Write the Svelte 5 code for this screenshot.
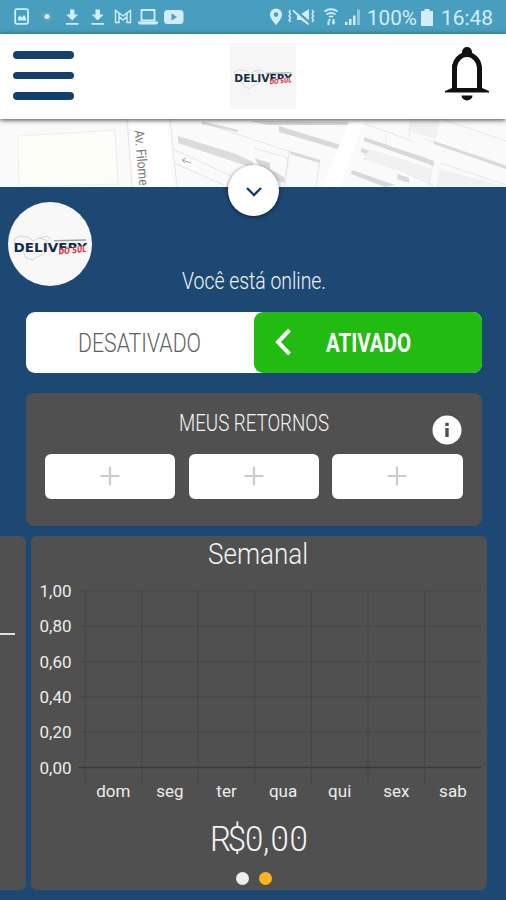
<script lang="ts">
  const days = ['dom', 'seg', 'ter', 'qua', 'qui', 'sex', 'sab'];
  const ticks = ['1,00', '0,80', '0,60', '0,40', '0,20', '0,00'];
  const slots = [0, 1, 2];

  const colWidth = 56.6;
  const rowHeight = 35.3;
  const gridLeft = 54;
  const gridTop = 18;

  let online = $state(true);
  let page = $state(1);
</script>

<!-- condensed display text: stretched to a fixed width, baseline at the bottom -->
{#snippet label(text: string, width: number, cap: number, kind: string)}
  <svg class="label {kind}" {width} height={cap} viewBox="0 0 {width} {cap}">
    <text x="0" y={cap} font-size={cap / 0.711} textLength={width} lengthAdjust="spacingAndGlyphs">{text}</text>
  </svg>
{/snippet}

{#snippet logo(size: number)}
  <svg class="logo" width={size} height={size} viewBox="0 0 84 84">
    <path class="logo-map" d="M6 37l6-3 8 1 5 4 6-3 7 2 3 6-5 8-7 3-4 3-7-2-3-7-7-2zM31 36l7-2 5 3" />
    <text class="logo-main" x="5.500" y="49.500" font-size="13" textLength="73.500" lengthAdjust="spacingAndGlyphs">DELIVERY</text>
    <path class="logo-cut" d="M51 48l28-4.500v8H53z" />
    <path class="logo-band" d="M46 38.700l32-.8" />
    <text class="logo-sub" x="51" y="52.500" font-size="8.500" textLength="28" lengthAdjust="spacingAndGlyphs" transform="rotate(-6 52 53)">DO SUL</text>
  </svg>
{/snippet}

<div class="phone">
  <div class="status">
    <svg class="status-icons" width="184" height="34" viewBox="0 0 184 34">
      <rect x="15.2" y="9.2" width="12.8" height="14.6" rx="1.5" class="line" />
      <path d="M18 20.5v-3l2-2 2 2 2-2.500 2 3v2.500z" />
      <circle cx="47" cy="16.500" r="4.600" class="ring" />
      <circle cx="47" cy="16.500" r="2.600" />
      <path d="M70 9.500h4.400v5h3.800l-6 6-6-6H70zM66 23h12.500v1.800H66z" />
      <path d="M95.500 9.500h4.400v5h3.800l-6 6-6-6h3.800zM91.500 23H104v1.800H91.500z" />
      <path class="line thin" d="M115.500 22.500v-12l7.500 5.500 7.500-5.500v12h-3.500v-6l-4 3.500-4-3.500v6zM119 16.500v-3M127 16.500v-3" />
      <path class="line" d="M141.500 10h13v10.500h-13z" />
      <path d="M138 21.500h20v1q0 2-2 2h-16q-2 0-2-2z" />
      <rect x="164" y="10" width="19.500" height="14" rx="3.500" />
      <path class="hole" d="M171.500 13.500l5.500 3.500-5.500 3.500z" />
    </svg>
    <div class="status-right">
      <svg width="98" height="34" viewBox="267 0 98 34">
        <path fill-rule="evenodd" d="M274 8.500a6 6 0 0 1 6 6c0 4.200-6 10.500-6 10.500s-6-6.300-6-10.500a6 6 0 0 1 6-6zm0 3.800a2.300 2.300 0 1 0 0 4.600 2.300 2.300 0 0 0 0-4.600z" />
        <path d="M295 14h4l8-5v16l-8-5h-4z" />
        <path class="line thin" d="M288.500 10l-1.500 2 1.500 2-1.500 2 1.500 2-1.500 2 1.500 2M310 10l1.500 2-1.500 2 1.500 2-1.500 2 1.500 2-1.500 2" />
        <path class="slash" d="M292 10l15 13" />
        <path class="line" d="M291 10.500l15 13.500" />
        <path class="line" d="M322.500 11.500q6.500-4.500 13 0M324.500 14.500q4.500-3 9 0M327 17q2-1.300 4 0" />
        <path d="M324.500 21h2v-2h2v2h-1v4h-2v-4zM332.500 19h-2v3h-1l2 3 2-3h-1z" />
        <path d="M343 22h2.500v3H343zM347 19h2.500v6H347zM351 15.500h2.500V25H351z" />
        <path class="faded" d="M355 9.500h3V25h-3z" />
      </svg>
      {@render label('100%', 50, 15, 'status-text')}
      <svg class="battery" width="12" height="17" viewBox="0 0 12 17"><path d="M3.500 0h5v2H12v15H0V2h3.500z" /></svg>
      {@render label('16:48', 52, 15, 'status-text')}
    </div>
  </div>

  <header>
    <button class="menu" aria-label="Menu"><i></i><i></i><i></i></button>
    <div class="brand">{@render logo(66)}</div>
    <button class="bell" aria-label="Notificações">
      <svg width="46" height="56" viewBox="0 0 46 56">
        <path class="bell-line" d="M10.500 41V23a12.500 14.500 0 0 1 25 0v18" />
        <path d="M8 18v24L1 45v1.500h44V45l-7-3V30h-5v12H13V24zM18 9V6a5 5 0 0 1 10 0v3zM17.500 49.500h11a5.500 5 0 0 1-11 0z" />
      </svg>
    </button>
  </header>

  <div class="map">
    <svg width="506" height="68" viewBox="0 0 506 68">
      <rect width="506" height="68" fill="#fafafa" />
      <path fill="#fdfdf8" stroke="#ededee" d="M18 17l97-6 3 54-99 3z" />
      <path fill="#fff" d="M129 0h38l6 68h-38z" />
      <path stroke="#e6e6e6" fill="none" d="M127 0l5 68M170 0l7 68M173 30l60 28M174 44l50 22M210 6l90 30M254 29l34 10-4 28M289 33l-4 33M320 40l-4 28M337 39l-6 29M364 21l60 18M386 15v12l40 12M412 0l-3 18M424 20l100 32M363 35l70 31M433 42l-4 25M365 5l50 18M440 44l66 22M442 0l64 22" />
      <path fill="#dedcda" d="M178 17l58 18 17 8v6l-15-5-60-20z" />
      <path fill="#d9d9d9" d="M202 2l36 9v2l-36-8zM279 7l65 20v5l-65-19zM290 32l30 9v3l-30-9zM364 18l70 24v5l-70-25zM361 29l23 8v4l-23-8zM352 51l43 15-10 2-34-13zM398 55l11 4v5l-12-4zM434 22l72 25v3l-72-25zM254 39l16 5v6l14 8v6l-16-5zM250 2l102 1v3h-85z" />
      <path fill="#f1f1f1" d="M370 30l62 20-3 12-66-22zM410 0h30l-4 20-28-8zM440 50l66 18h-70z" />
      <path fill="#fff" d="M350 0h15l-25 68h-18z" />
      <path stroke="#aaa9c4" fill="none" d="M182 41l9 3m-9-3l4-2m-4 2l3 3" />
      <text class="street" x="0" y="0" textLength="55.500" lengthAdjust="spacingAndGlyphs" transform="translate(134.500 11.500) rotate(85)">Av. Filome</text>
    </svg>
  </div>

  <main>
    <button class="collapse" aria-label="Recolher">
      <svg width="18" height="12" viewBox="0 0 18 12"><path d="M2 2l7 7 7-7" /></svg>
    </button>
    <div class="avatar">{@render logo(84)}</div>

    <div class="online">{@render label('Você está online.', 144, 16.5, 'light')}</div>

    <div class="toggle">
      <button class="off" onclick={() => (online = false)}>
        {@render label('DESATIVADO', 123, 18.5, 'muted')}
      </button>
      <button class="on" class:active={online} onclick={() => (online = true)}>
        <svg width="18" height="28" viewBox="0 0 18 28"><path d="M15.500 2L4 14l11.500 12" /></svg>
        {@render label('ATIVADO', 85, 18.5, 'strong')}
      </button>
    </div>

    <section class="returns">
      <div class="returns-head">
        {@render label('MEUS RETORNOS', 150, 17, 'light')}
        <svg class="info" width="30" height="30" viewBox="0 0 30 30">
          <circle cx="15" cy="15" r="14.500" fill="#fff" />
          <path fill="#4f4f4f" d="M13.300 7.800h3.400v3.200h-3.400zM13.300 13h3.400v9h-3.400z" />
        </svg>
      </div>
      <div class="slots">
        {#each slots as slot (slot)}
          <button class="slot" aria-label="Adicionar retorno">
            <svg width="20" height="20" viewBox="0 0 20 20"><path d="M10 .5v19M.5 10h19" /></svg>
          </button>
        {/each}
      </div>
    </section>

    <div class="carousel">
      <section class="card previous"><hr /></section>
      <section class="card weekly">
        {@render label('Semanal', 100, 21.5, 'light')}
        <svg class="chart" width="456" height="240" viewBox="0 0 456 240">
          {#each ticks as tick, i}
            <path class="grid" class:axis={i === 5} d="M{gridLeft - 7} {gridTop + i * rowHeight}h{7 * colWidth + 7}" />
            <text x="40.500" y={gridTop + i * rowHeight + 6} text-anchor="end">{tick}</text>
          {/each}
          {#each days as day, i}
            <path class="grid" d="M{gridLeft + i * colWidth} {gridTop}v{5 * rowHeight + 18}" />
            <text x={gridLeft + (i + 0.5) * colWidth} y="224" text-anchor="middle">{day}</text>
          {/each}
        </svg>
        <svg class="amount" width="98" height="32" viewBox="0 0 98 32">
          <text x="0 19 37.600 57 65 85.500" y="25.500" font-size="35.500" transform="scale(.93 1)">R$0,00</text>
          {#each [44.3, 69.8, 88.8] as cx}
            <circle {cx} cy="12.800" r="1.300" />
          {/each}
        </svg>
        <div class="dots">
          {#each [0, 1] as dot}
            <span class:current={page === dot}></span>
          {/each}
        </div>
      </section>
    </div>
  </main>
</div>

<style>
  :global(body) {
    background: #1d4873;
  }

  .phone {
    width: 506px;
    height: 900px;
    overflow: hidden;
    font-family: Roboto, sans-serif;
    background: #1d4873;
  }

  svg {
    display: block;
    flex-shrink: 0;
  }

  button {
    padding: 0;
    border: none;
    background: none;
    font: inherit;
  }

  .label,
  .logo,
  .amount {
    overflow: visible;
  }

  .light {
    fill: #f4f4f4;
    font-weight: 300;
  }

  .muted {
    fill: #606060;
    font-weight: 300;
  }

  .strong {
    fill: #fff;
    font-weight: 700;
  }

  .status-text {
    fill: #d3edf7;
  }

  .status {
    height: 34px;
    display: flex;
    justify-content: space-between;
    background: #489ebe;
    fill: #d3edf7;
  }

  .status .line {
    fill: none;
    stroke: #d3edf7;
    stroke-width: 1.8;
  }

  .status .thin {
    stroke-width: 1.4;
  }

  .ring {
    fill: none;
    stroke: #6e9da8;
    stroke-width: 2;
  }

  .hole {
    fill: #489ebe;
  }

  .slash {
    stroke: #489ebe;
    stroke-width: 4;
  }

  .faded {
    opacity: 0.5;
  }

  .status-right {
    display: flex;
    align-items: center;
    padding-right: 13px;
  }

  .battery {
    margin: 0 8px 0 4px;
  }

  header {
    position: relative;
    z-index: 2;
    height: 84.5px;
    display: flex;
    align-items: center;
    justify-content: space-between;
    box-sizing: border-box;
    padding: 0 16px 0 13px;
    background: #fff;
    box-shadow: 0 1px 5px rgba(0, 0, 0, 0.75);
  }

  .menu {
    width: 61px;
    display: grid;
    gap: 13px;
    margin-top: -2px;
  }

  .menu i {
    height: 7.5px;
    border-radius: 4px;
    background: #153f6f;
  }

  .brand {
    margin-right: -7px;
    background: #f6f6f6;
  }

  .bell {
    margin-top: -4px;
  }

  .bell path {
    fill: #111;
  }

  .bell .bell-line {
    fill: none;
    stroke: #111;
    stroke-width: 5;
  }

  .logo-map {
    fill: none;
    stroke: #c9cccc;
    stroke-width: 0.8;
  }

  .logo-main {
    fill: #142c4c;
    font-family: "DejaVu Sans", sans-serif;
    font-weight: 700;
  }

  .logo-cut {
    fill: #f6f6f6;
  }

  .logo-band {
    stroke: #8fa9a8;
    stroke-width: 1.5;
  }

  .logo-sub {
    fill: #d63440;
    font-family: "DejaVu Sans", sans-serif;
    font-weight: 700;
    font-style: italic;
  }

  .map {
    height: 68px;
  }

  .street {
    font-size: 13.5px;
    fill: #777;
  }

  main {
    position: relative;
    display: flow-root;
    height: 714px;
  }

  .collapse {
    position: absolute;
    left: 228px;
    top: -22px;
    z-index: 3;
    width: 51px;
    height: 51px;
    display: grid;
    place-items: center;
    padding-top: 4px;
    border-radius: 50%;
    background: #fff;
    box-shadow: 0 1px 4px rgba(0, 0, 0, 0.55);
  }

  .collapse path {
    fill: none;
    stroke: #153f6f;
    stroke-width: 2.4;
  }

  .avatar {
    width: 84px;
    height: 84px;
    margin: 15px 0 0 8px;
    border-radius: 50%;
    background: #f8f8f8;
  }

  .online {
    display: flex;
    justify-content: center;
    margin: -14px 0 0 2px;
  }

  .toggle {
    display: grid;
    grid-template-columns: 1fr 1fr;
    width: 456px;
    height: 61px;
    margin: 23.5px 0 0 25.5px;
    border-radius: 9px;
    background: #fff;
  }

  .off,
  .on {
    display: flex;
    align-items: center;
    border-radius: 9px;
  }

  .off {
    justify-content: center;
  }

  .on.active {
    padding-left: 20px;
    gap: 34px;
    background: #22bb12;
  }

  .on > svg > path {
    fill: none;
    stroke: #fff;
    stroke-width: 4;
  }

  .returns {
    width: 456px;
    height: 133px;
    box-sizing: border-box;
    margin: 20px 0 0 25.5px;
    padding: 21px 19px 0 19.5px;
    border-radius: 8px;
    background: #505050;
  }

  .returns-head {
    position: relative;
    height: 40px;
    display: flex;
    justify-content: center;
  }

  .info {
    position: absolute;
    right: 1px;
    top: 1px;
  }

  .slots {
    display: grid;
    grid-template-columns: repeat(3, 1fr);
    gap: 13.5px;
  }

  .slot {
    height: 45px;
    display: grid;
    place-items: center;
    border-radius: 6px;
    background: #fff;
  }

  .slot path {
    stroke: #cbcbcb;
    stroke-width: 2.2;
  }

  .carousel {
    display: flex;
    gap: 5px;
    height: 354px;
    margin-top: 10.5px;
  }

  .card {
    box-sizing: border-box;
    background: #505050;
    border-radius: 6px;
  }

  .previous {
    width: 26px;
    padding-top: 97px;
    border-radius: 0 6px 6px 0;
  }

  .previous hr {
    width: 15px;
    height: 1.5px;
    margin: 0;
    border: none;
    background: #e0e0e0;
  }

  .weekly {
    width: 456px;
    display: flex;
    flex-direction: column;
    align-items: center;
    padding-top: 5.5px;
  }

  .weekly > .label {
    margin-left: -2px;
  }

  .chart {
    margin-top: 10px;
    font-size: 17px;
    fill: #ececec;
  }

  .grid {
    stroke: #464646;
    stroke-width: 1;
  }

  .axis {
    stroke: #383838;
    stroke-width: 1.5;
  }

  .amount {
    margin-top: 12px;
    fill: #f4f4f4;
    font-weight: 300;
  }

  .dots {
    display: flex;
    gap: 10px;
    margin: 15px 0 0 -11px;
  }

  .dots span {
    width: 13px;
    height: 13px;
    border-radius: 50%;
    background: #eee;
  }

  .dots .current {
    background: #fbb421;
  }
</style>
